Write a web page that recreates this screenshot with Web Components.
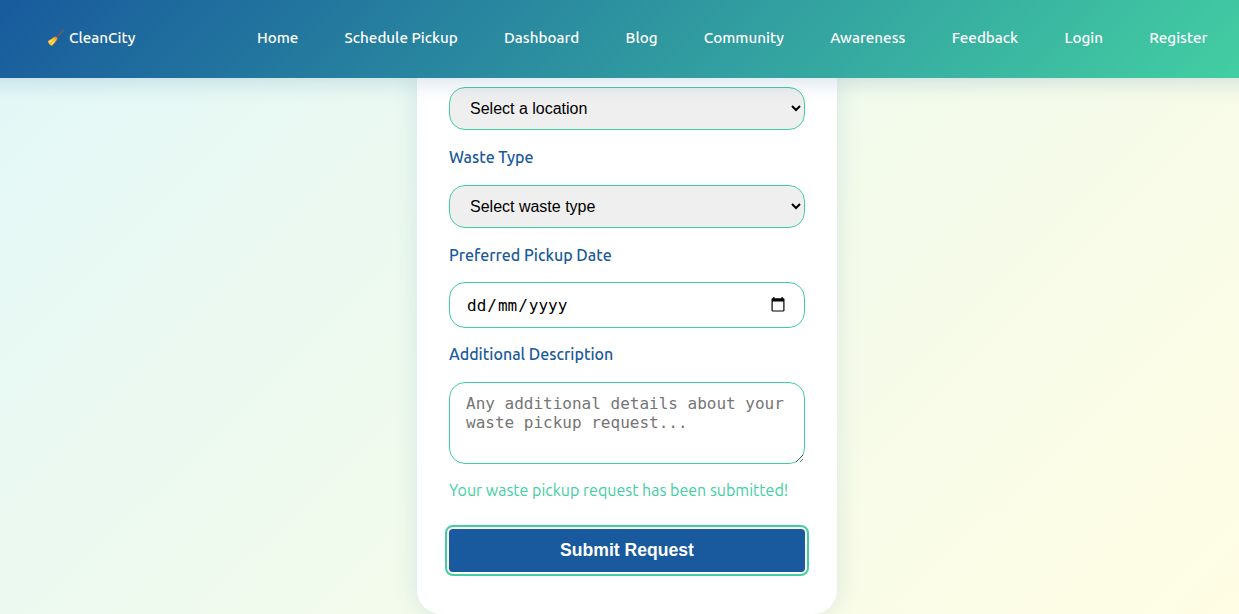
<!DOCTYPE html>
<html lang="en-GB">
<head>
<meta charset="utf-8">
<title>CleanCity</title>
<style>
html,body{margin:0;height:100%;overflow:hidden}
body{font-family:Ubuntu,"Noto Sans","Open Sans",sans-serif;background:linear-gradient(135deg,#e1f8f8 0%,#eaf9f2 25%,#f4fbea 60%,#fffde4 100%);color:#185a9d}
</style>
</head>
<body>
<city-app></city-app>
<script>
const define = (name, html) => customElements.define(name, class extends HTMLElement {
  constructor() {
    super();
    const t = document.createElement('template');
    t.innerHTML = html;
    this.attachShadow({mode: 'open'}).append(t.content.cloneNode(true));
  }
  connectedCallback() {
    const option = this.shadowRoot.querySelector('option');
    if (option) option.textContent = this.getAttribute('label');
  }
});

define('broom-icon', `<style>:host{display:block;width:18px;height:18px}svg{display:block}</style>
<svg width="18" height="18" viewBox="0 0 18 18">
<path d="M16.6 1.1 8.7 9.2" stroke="#855c52" stroke-width="1.2" stroke-linecap="round"/>
<path d="M7.3 7.9C5 9.5 2.6 10.8.8 12.2c.5 2.1 2 4 4.2 4.6 1.9-1.9 3.8-4.2 5-6.8Z" fill="#fbc02d"/>
<path d="m2.2 13.2 2.8-1.6M4.5 15.5l2.4-3" stroke="#ffe57f" stroke-width="1.2"/>
<path d="m6.6 8.4 3 3 1-2-2-2Z" fill="#ef8f45"/>
</svg>`);

define('nav-link', `<style>:host{display:block;white-space:nowrap}</style><slot></slot>`);

/* The transparent side borders carry the shadow past both window edges. */
define('city-header', `<style>
:host{display:flex;align-items:center;height:78px;box-sizing:border-box;margin:0 -24px;border:solid transparent;border-width:0 24px;padding:0 0 2px 47px;background:linear-gradient(135deg,#185a9d 0%,#43cea2 100%) padding-box;box-shadow:0 4px 20px rgba(24,90,157,.18);color:#fff;font-size:15.2px;font-weight:500;line-height:20px;position:relative;z-index:2}
.logo{display:flex;align-items:center;gap:4px;width:209.9px}
nav{display:flex;gap:46.32px}
</style>
<div class="logo"><broom-icon></broom-icon><nav-link>CleanCity</nav-link></div>
<nav>
<nav-link>Home</nav-link><nav-link>Schedule Pickup</nav-link><nav-link>Dashboard</nav-link><nav-link>Blog</nav-link><nav-link>Community</nav-link><nav-link>Awareness</nav-link><nav-link>Feedback</nav-link><nav-link>Login</nav-link><nav-link>Register</nav-link>
</nav>`);

define('field-label', `<style>
:host{display:block;font-size:16px;font-weight:500;line-height:22px;color:#185a9d}
</style><slot></slot>`);

define('select-field', `<style>
:host{display:block}
select{display:block;width:100%;height:43px;box-sizing:border-box;padding:0 0 0 16px;border:1px solid #43cea2;border-radius:16px;background:#efefef;color:#000;font:16px "Liberation Sans",Arial,sans-serif}
</style><select><option></option></select>`);

define('date-field', `<style>
:host{display:flex;align-items:center;justify-content:space-between;height:46px;box-sizing:border-box;padding:0 19px 0 16px;border:1px solid #43cea2;border-radius:16px;background:#fff;color:#000;font:16px "DejaVu Sans Mono",monospace}
.date{display:flex}.date span{padding:0 1px}
svg{display:block;margin-top:-1px}
</style>
<div class="date"><span>dd</span>/<span>mm</span>/<span>yyyy</span></div>
<svg width="14" height="15" viewBox="0 0 14 15"><path fill-rule="evenodd" d="M2.2 0h1.3v1.3h7V0h1.3v1.3h.6c.7 0 1.1.5 1.1 1.1v10.9c0 .7-.4 1.2-1.1 1.2H1.6c-.7 0-1.1-.5-1.1-1.2V2.4c0-.6.4-1.1 1.1-1.1h.6ZM1.7 4.6v8.8h10.6V4.6Z"/></svg>`);

define('note-field', `<style>
:host{display:block}
textarea{display:block;width:100%;height:82px;box-sizing:border-box;margin:0;padding:11px 16px;border:1px solid #43cea2;border-radius:16px;background:#fff;color:#000;font:16px/19px "DejaVu Sans Mono",monospace;resize:both}
textarea::placeholder{color:#757575}
</style><textarea placeholder="Any additional details about your waste pickup request..."></textarea>`);

define('submit-button', `<style>
:host{display:block}
button{display:block;width:100%;height:43px;padding:0;border:0;border-radius:4px;background:#185a9d;color:#fff;font:bold 17.6px "Liberation Sans",Arial,sans-serif;outline:2px solid #43cea2;outline-offset:2px}
</style><button type="button"><slot></slot></button>`);

define('pickup-card', `<style>
:host{display:block;width:420px;height:536px;box-sizing:border-box;margin-left:417px;padding:9px 32px 0;border-radius:0 0 24px 24px;background:#fff;box-shadow:0 0 24px rgba(24,90,157,.13)}
form{display:flex;flex-direction:column}
field-label{margin:16px 0 17px}
.date{margin-bottom:16px}
.last{margin:15px 0 17px}
.msg{margin:15px 0 28px;font-size:16px;font-weight:400;line-height:22px;color:#43cea2}
</style>
<form>
<select-field label="Select a location"></select-field>
<field-label>Waste Type</field-label>
<select-field label="Select waste type"></select-field>
<field-label class="date">Preferred Pickup Date</field-label>
<date-field></date-field>
<field-label class="last">Additional Description</field-label>
<note-field></note-field>
<div class="msg">Your waste pickup request has been submitted!</div>
<submit-button>Submit Request</submit-button>
</form>`);

define('city-app', `<style>:host{display:block;height:614px;overflow:hidden}</style>
<city-header></city-header><pickup-card></pickup-card>`);
</script>
</body>
</html>
